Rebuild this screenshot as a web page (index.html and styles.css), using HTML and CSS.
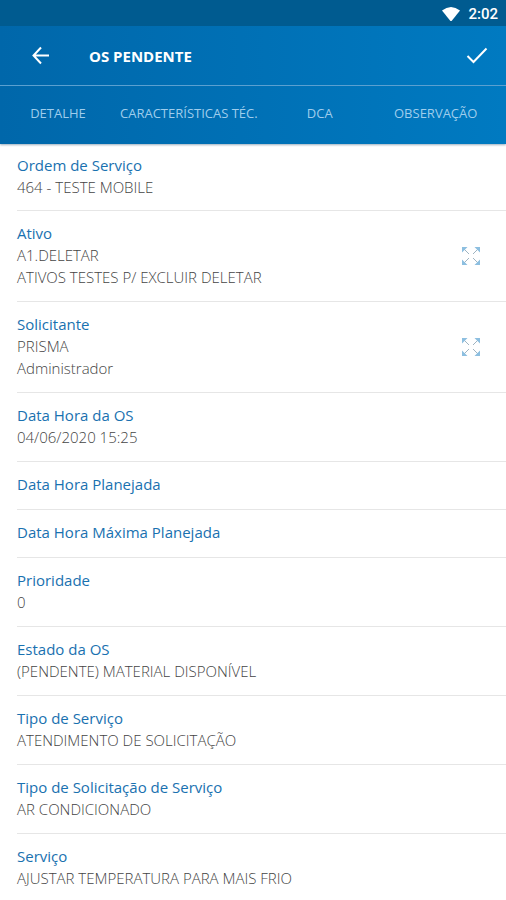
FILE: index.html
```html
<!DOCTYPE html>
<html lang="pt-BR">
<head>
<meta charset="utf-8">
<meta name="viewport" content="width=device-width, initial-scale=1">
<title>OS Pendente</title>
<link rel="stylesheet" href="styles.css">
</head>
<body>
<header class="header">
  <div class="status">
    <svg class="status-wifi" viewBox="0 0 20 16" aria-hidden="true"><path d="M1 4.500Q10-2.500 19 4.500L11 14.500Q10 15.500 9 14.500Z"/></svg>
    <span>2:02</span>
  </div>
  <div class="toolbar">
    <button class="icon-button" type="button" aria-label="Voltar">
      <svg class="icon" viewBox="0 0 24 24"><path d="M20 11.500H5M12 3.500L4.500 11.500L12 19.500"/></svg>
    </button>
    <h1 class="title">OS PENDENTE</h1>
    <button class="icon-button" type="button" aria-label="Confirmar">
      <svg class="icon" viewBox="0 0 24 24"><path d="M2.500 12L8.500 18L21.500 4.500"/></svg>
    </button>
  </div>
  <nav class="tabs">
    <a class="tab" href="#detalhe">DETALHE</a>
    <a class="tab" href="#caracteristicas">CARACTERÍSTICAS TÉC.</a>
    <a class="tab" href="#dca">DCA</a>
    <a class="tab" href="#observacao">OBSERVAÇÃO</a>
  </nav>
</header>
<main class="content" id="detalhe">
  <dl class="fields">
    <div class="field"><dt>Ordem de Serviço</dt><dd>464 - TESTE MOBILE</dd></div>
    <div class="field">
      <dt>Ativo</dt><dd>A1.DELETAR</dd><dd>ATIVOS TESTES P/ EXCLUIR DELETAR</dd>
      <dd class="field-action"><button class="expand" type="button" aria-label="Expandir ativo"><svg class="expand-icon" viewBox="0 0 20 20"><path class="expand-shaft" d="M3 3L8 8M17 3L12 8M3 17L8 12M17 17L12 12"/><path class="expand-head" d="M1 1H6.500L1 6.500ZM19 1H13.500L19 6.500ZM1 19H6.500L1 13.500ZM19 19H13.500L19 13.500Z"/></svg></button></dd>
    </div>
    <div class="field">
      <dt>Solicitante</dt><dd>PRISMA</dd><dd>Administrador</dd>
      <dd class="field-action"><button class="expand" type="button" aria-label="Expandir solicitante"><svg class="expand-icon" viewBox="0 0 20 20"><path class="expand-shaft" d="M3 3L8 8M17 3L12 8M3 17L8 12M17 17L12 12"/><path class="expand-head" d="M1 1H6.500L1 6.500ZM19 1H13.500L19 6.500ZM1 19H6.500L1 13.500ZM19 19H13.500L19 13.500Z"/></svg></button></dd>
    </div>
    <div class="field"><dt>Data Hora da OS</dt><dd>04/06/2020 15:25</dd></div>
    <div class="field"><dt>Data Hora Planejada</dt></div>
    <div class="field"><dt>Data Hora Máxima Planejada</dt></div>
    <div class="field"><dt>Prioridade</dt><dd>0</dd></div>
    <div class="field"><dt>Estado da OS</dt><dd>(PENDENTE) MATERIAL DISPONÍVEL</dd></div>
    <div class="field"><dt>Tipo de Serviço</dt><dd>ATENDIMENTO DE SOLICITAÇÃO</dd></div>
    <div class="field"><dt>Tipo de Solicitação de Serviço</dt><dd>AR CONDICIONADO</dd></div>
    <div class="field"><dt>Serviço</dt><dd>AJUSTAR TEMPERATURA PARA MAIS FRIO</dd></div>
  </dl>
</main>
</body>
</html>
```

FILE: styles.css
```css
* {
  box-sizing: border-box;
}

body {
  margin: 0;
  background: #fff;
  color: #444;
  font-family: "Open Sans", "Noto Sans", sans-serif;
  font-size: 15px;
  line-height: 22px;
}

button {
  padding: 0;
  border: 0;
  background: none;
  color: inherit;
  cursor: pointer;
}

.header {
  background: linear-gradient(90deg, #0067aa, #007ac1);
  color: #fff;
  box-shadow: 0 1px 2px rgba(0, 50, 90, 0.4);
}

.status {
  display: flex;
  align-items: center;
  justify-content: flex-end;
  gap: 7px;
  height: 26px;
  padding: 2px 8px 0 0;
  background: #005b90;
  font-family: Roboto, sans-serif;
  font-size: 15px;
  font-weight: 500;
}

.status-wifi {
  width: 20px;
  height: 16px;
  fill: #fff;
}

.toolbar {
  display: flex;
  align-items: center;
  height: 60px;
  padding: 0 17px 0 29px;
  border-bottom: 1px solid #5ba0d0;
}

.icon-button {
  display: flex;
}

.icon {
  width: 24px;
  height: 24px;
  fill: none;
  stroke: #fff;
  stroke-width: 2;
}

.title {
  flex: 1;
  margin: 0 0 0 36px;
  font-size: 15px;
  font-weight: 700;
}

.tabs {
  display: flex;
  height: 58px;
  overflow: hidden;
}

.tab {
  display: flex;
  flex: none;
  align-items: center;
  justify-content: center;
  min-width: 116px;
  padding: 0 4px 4px;
  color: #9fcdec;
  font-size: 13px;
  text-decoration: none;
}

.fields {
  margin: 0;
}

.field {
  position: relative;
  min-height: 48px;
  margin-left: 17px;
  padding: 11px 0 13px;
  border-bottom: 1px solid #e6e6e6;
}

.field:first-child {
  padding-top: 10px;
  padding-bottom: 12px;
}

.field:last-child {
  border-bottom: 0;
}

.field dt {
  color: #1971b0;
}

.field dd {
  margin: 0;
  font-weight: 300;
}

.field .field-action {
  position: absolute;
  top: 0;
  right: 25px;
  bottom: 0;
  display: flex;
  align-items: center;
}

.expand {
  display: flex;
}

.expand-icon {
  width: 20px;
  height: 20px;
  fill: none;
}

.expand-shaft {
  stroke: #9fb4c2;
}

.expand-head {
  fill: #8dbfe0;
}
```
